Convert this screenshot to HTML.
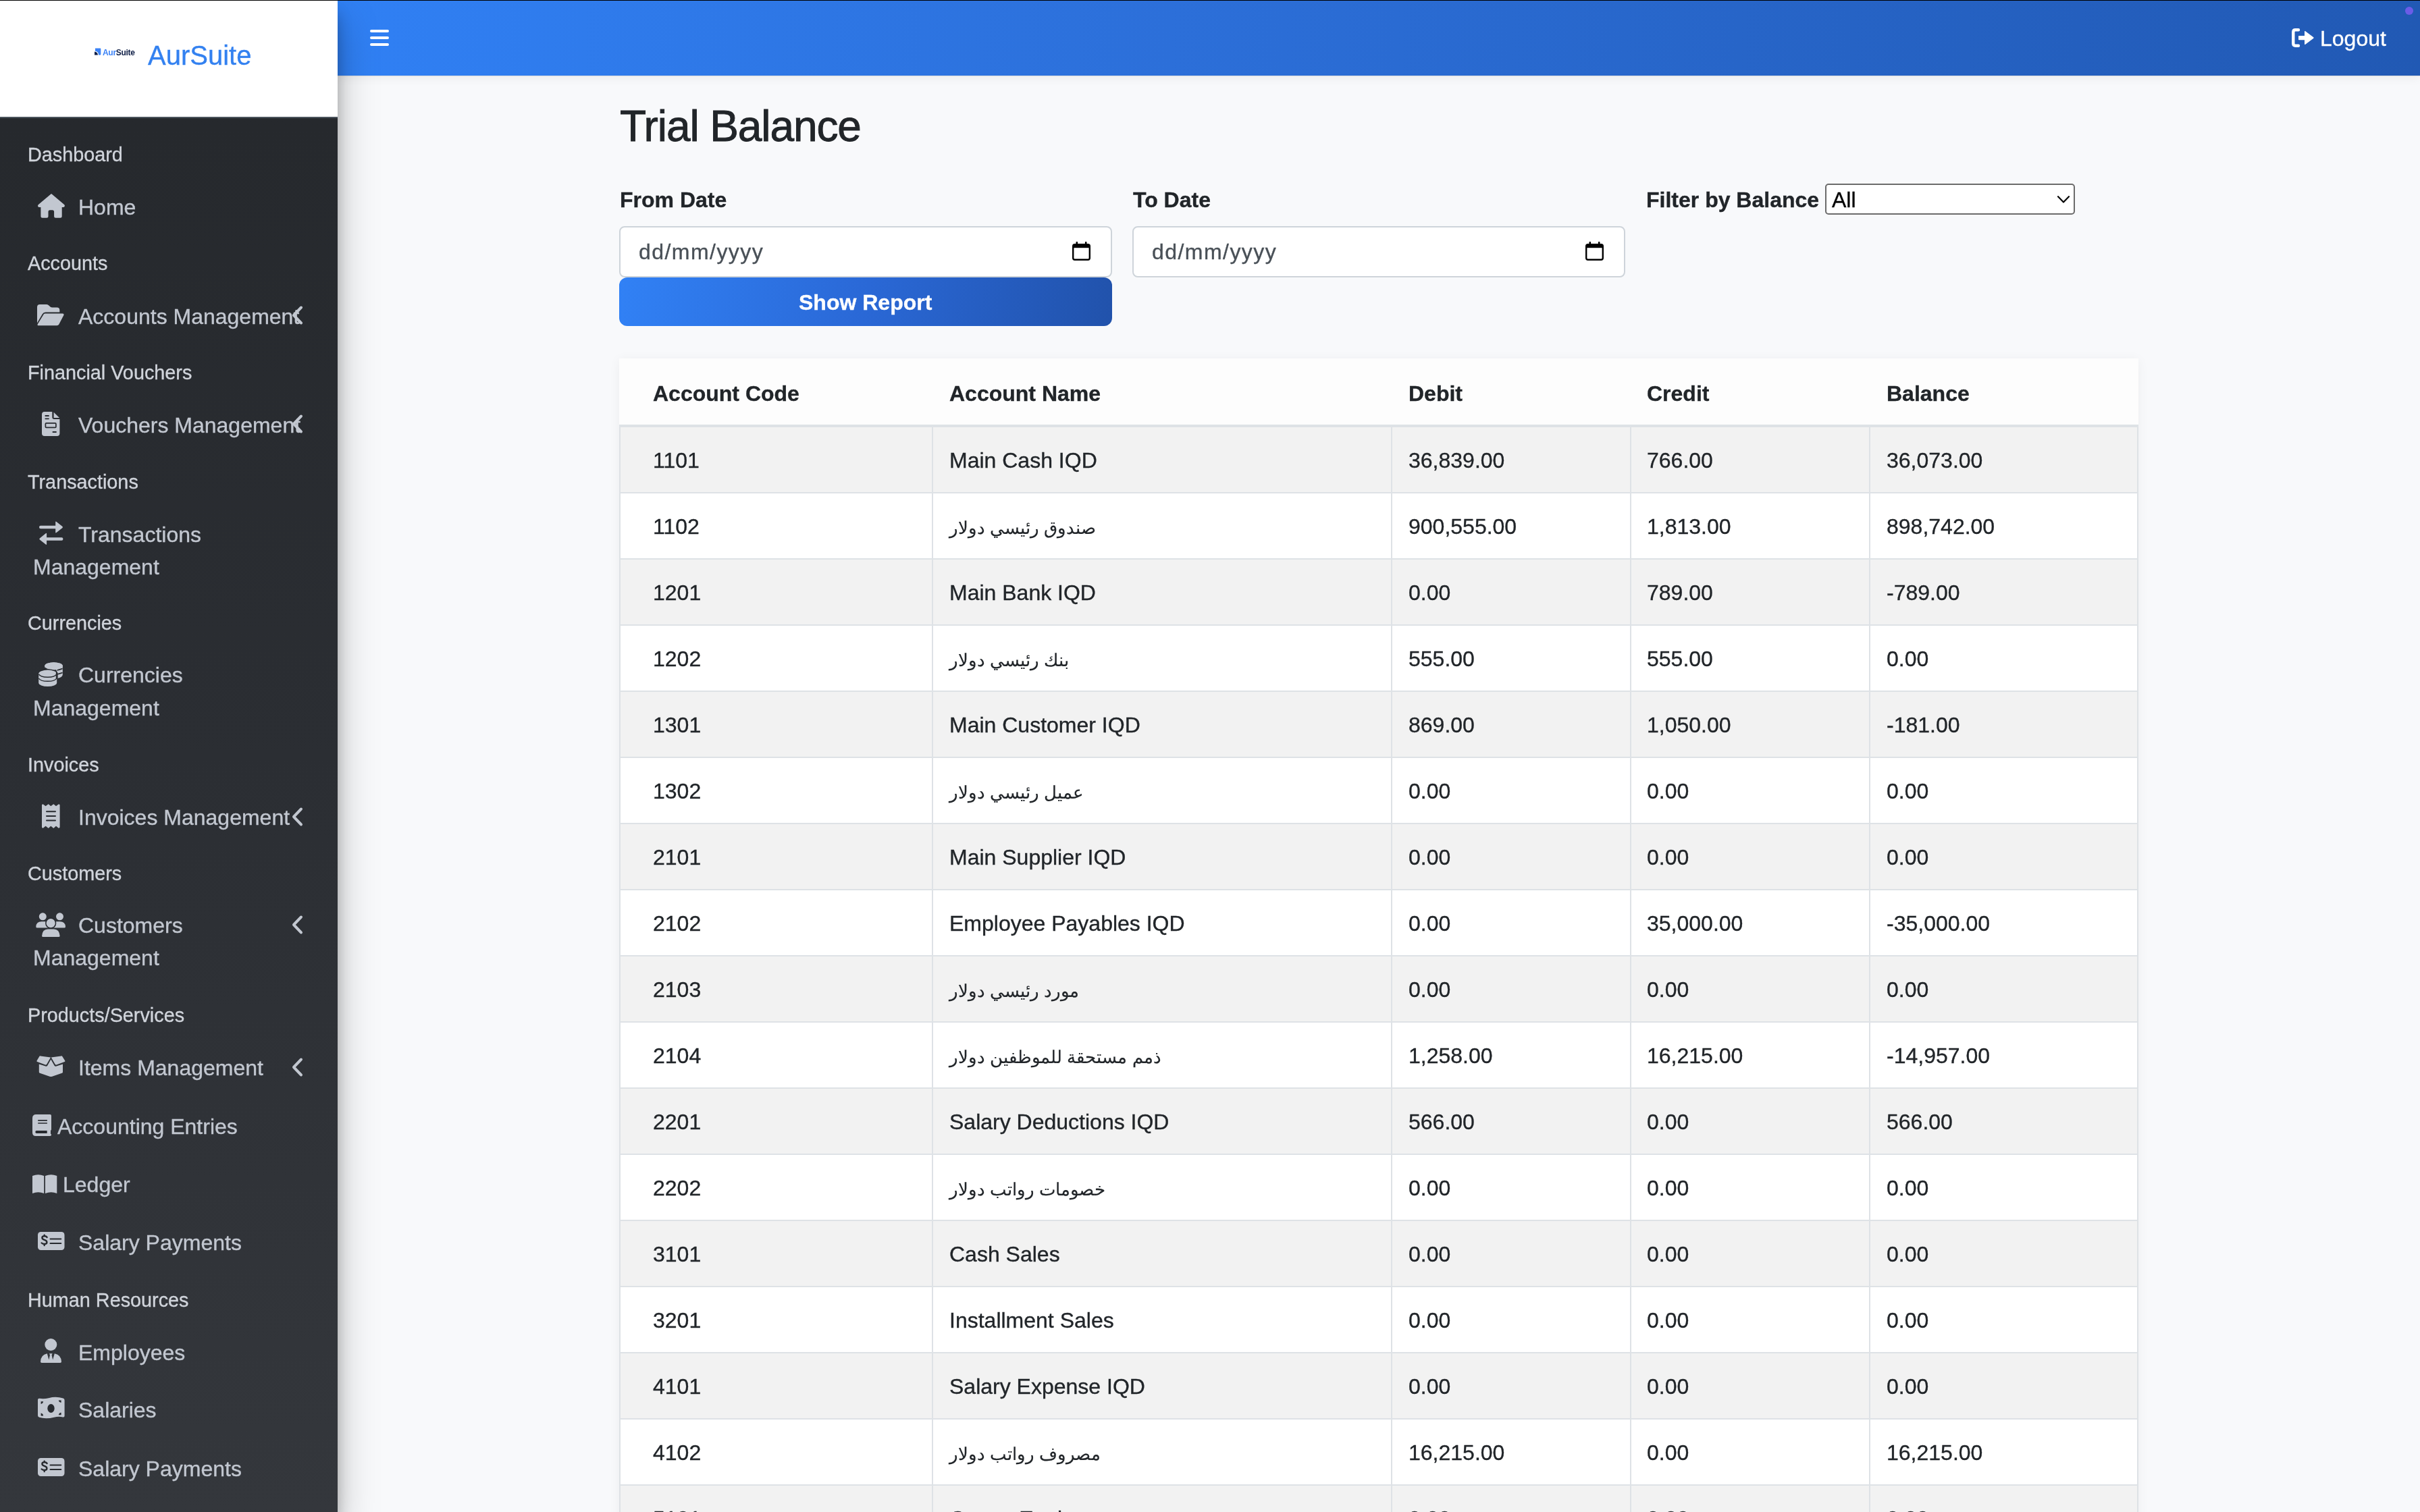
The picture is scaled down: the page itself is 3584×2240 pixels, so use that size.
<!DOCTYPE html>
<html><head><meta charset="utf-8"><title>Trial Balance</title><style>
*{margin:0;padding:0;box-sizing:border-box}
html,body{width:3584px;height:2240px;overflow:hidden;background:#f8f9fb;font-family:"Liberation Sans",sans-serif}
.t{position:absolute;white-space:nowrap;line-height:1;will-change:transform;-webkit-text-stroke:0.35px currentColor}
.abs{position:absolute}
svg{position:absolute;overflow:visible}
@media (max-width:2400px){html{zoom:0.5}}
</style></head><body>
<div class="abs" style="left:0;top:0;width:3584px;height:1px;background:#000;z-index:50"></div><div class="abs" style="left:500px;top:1px;width:3084px;height:111px;background:linear-gradient(90deg,#3080f4 0%,#2c6fd9 40%,#2159b4 100%);box-shadow:0 1px 1px rgba(0,0,0,.07),0 4px 14px rgba(0,0,0,.05);z-index:5"></div><svg style="left:548px;top:44px;z-index:6" width="28" height="24" viewBox="0 0 28 24"><rect x="0" y="0" width="28" height="4" rx="2" fill="#fff"/><rect x="0" y="10" width="28" height="4" rx="2" fill="#fff"/><rect x="0" y="20" width="28" height="4" rx="2" fill="#fff"/></svg><svg style="left:3394px;top:42px;z-index:6" width="33" height="28" viewBox="0 0 33 28"><path d="M10 2.3 H5.5 Q2.3 2.3 2.3 5.5 V22.5 Q2.3 25.7 5.5 25.7 H10" fill="none" stroke="#fff" stroke-width="4.4" stroke-linecap="round"/><path d="M10.7 11 H19 V4.8 Q19 3.5 20.3 4.3 L32.3 13.2 Q33 14 32.3 14.8 L20.3 23.7 Q19 24.5 19 23.2 V17.2 H10.7 Q10 17.2 10 16.5 V11.7 Q10 11 10.7 11Z" fill="#fff"/></svg><div class="t" style="left:3436px;top:40.91px;font-size:32px;color:#fff;font-weight:400;z-index:6">Logout</div>
<div class="abs" style="left:3562px;top:10px;width:12px;height:12px;border-radius:6px;background:#6b5ce7;z-index:7"></div><div class="abs" style="left:0;top:1px;width:500px;height:2239px;background:linear-gradient(180deg,#25282c 0%,#2b2e33 50%,#34373c 100%);box-shadow:0 28px 56px rgba(0,0,0,.25),0 20px 20px rgba(0,0,0,.22);z-index:10"></div><div class="abs" style="left:0;top:1px;width:500px;height:172px;background:#fff;border-bottom:2px solid #4b545c;z-index:11;height:174px"></div><svg style="left:140px;top:71px;z-index:12" width="60" height="12" viewBox="0 0 60 12"><path d="M1 0.5 H8.5 Q9.3 0.5 9.3 1.3 V9.5 Q9.3 10.5 8.3 10.5 H6 Q6 5.5 1 4.8 Z" fill="#3b82f6"/><path d="M0 5.5 Q4.5 6 5 10.5 H0 Z" fill="#0f1f47"/></svg><div class="t" style="left:152px;top:71.64px;font-size:12px;color:#0f1f47;font-weight:700;z-index:12;letter-spacing:-0.3px;-webkit-text-stroke:0"><span style="color:#3b82f6">Aur</span>Suite</div>
<div class="t" style="left:219px;top:62.14px;font-size:40px;color:#3381f0;font-weight:400;z-index:12">AurSuite</div>
<div class="t" style="left:41px;top:214.62px;font-size:28.8px;color:#d0d4db;font-weight:400;z-index:12">Dashboard</div>
<div class="t" style="left:41px;top:375.62px;font-size:28.8px;color:#d0d4db;font-weight:400;z-index:12">Accounts</div>
<div class="t" style="left:41px;top:537.62px;font-size:28.8px;color:#d0d4db;font-weight:400;z-index:12">Financial Vouchers</div>
<div class="t" style="left:41px;top:699.62px;font-size:28.8px;color:#d0d4db;font-weight:400;z-index:12">Transactions</div>
<div class="t" style="left:41px;top:908.62px;font-size:28.8px;color:#d0d4db;font-weight:400;z-index:12">Currencies</div>
<div class="t" style="left:41px;top:1118.62px;font-size:28.8px;color:#d0d4db;font-weight:400;z-index:12">Invoices</div>
<div class="t" style="left:41px;top:1279.62px;font-size:28.8px;color:#d0d4db;font-weight:400;z-index:12">Customers</div>
<div class="t" style="left:41px;top:1489.62px;font-size:28.8px;color:#d0d4db;font-weight:400;z-index:12">Products/Services</div>
<div class="t" style="left:41px;top:1911.62px;font-size:28.8px;color:#d0d4db;font-weight:400;z-index:12">Human Resources</div>
<div class="t" style="left:116px;top:290.91px;font-size:32px;color:#c2c7d0;font-weight:400;z-index:12">Home</div>
<div class="t" style="left:116px;top:452.91px;font-size:32px;color:#c2c7d0;font-weight:400;z-index:12">Accounts Management</div>
<div class="t" style="left:116px;top:613.91px;font-size:32px;color:#c2c7d0;font-weight:400;z-index:12">Vouchers Management</div>
<div class="t" style="left:116px;top:775.91px;font-size:32px;color:#c2c7d0;font-weight:400;z-index:12">Transactions</div>
<div class="t" style="left:49px;top:823.91px;font-size:32px;color:#c2c7d0;font-weight:400;z-index:12">Management</div>
<div class="t" style="left:116px;top:983.91px;font-size:32px;color:#c2c7d0;font-weight:400;z-index:12">Currencies</div>
<div class="t" style="left:49px;top:1032.91px;font-size:32px;color:#c2c7d0;font-weight:400;z-index:12">Management</div>
<div class="t" style="left:116px;top:1194.91px;font-size:32px;color:#c2c7d0;font-weight:400;z-index:12">Invoices Management</div>
<div class="t" style="left:116px;top:1354.91px;font-size:32px;color:#c2c7d0;font-weight:400;z-index:12">Customers</div>
<div class="t" style="left:49px;top:1402.91px;font-size:32px;color:#c2c7d0;font-weight:400;z-index:12">Management</div>
<div class="t" style="left:116px;top:1565.91px;font-size:32px;color:#c2c7d0;font-weight:400;z-index:12">Items Management</div>
<div class="t" style="left:85px;top:1652.91px;font-size:32px;color:#c2c7d0;font-weight:400;z-index:12">Accounting Entries</div>
<div class="t" style="left:93px;top:1738.91px;font-size:32px;color:#c2c7d0;font-weight:400;z-index:12">Ledger</div>
<div class="t" style="left:116px;top:1824.91px;font-size:32px;color:#c2c7d0;font-weight:400;z-index:12">Salary Payments</div>
<div class="t" style="left:116px;top:1987.91px;font-size:32px;color:#c2c7d0;font-weight:400;z-index:12">Employees</div>
<div class="t" style="left:116px;top:2072.91px;font-size:32px;color:#c2c7d0;font-weight:400;z-index:12">Salaries</div>
<div class="t" style="left:116px;top:2159.91px;font-size:32px;color:#c2c7d0;font-weight:400;z-index:12">Salary Payments</div>
<svg style="left:432px;top:453px;z-index:13" width="18" height="28" viewBox="0 0 18 28"><path d="M14 2.5 L3 14 L14 25.5" fill="none" stroke="#c2c7d0" stroke-width="4" stroke-linecap="round" stroke-linejoin="round"/></svg><svg style="left:432px;top:614px;z-index:13" width="18" height="28" viewBox="0 0 18 28"><path d="M14 2.5 L3 14 L14 25.5" fill="none" stroke="#c2c7d0" stroke-width="4" stroke-linecap="round" stroke-linejoin="round"/></svg><svg style="left:432px;top:1196px;z-index:13" width="18" height="28" viewBox="0 0 18 28"><path d="M14 2.5 L3 14 L14 25.5" fill="none" stroke="#c2c7d0" stroke-width="4" stroke-linecap="round" stroke-linejoin="round"/></svg><svg style="left:432px;top:1356px;z-index:13" width="18" height="28" viewBox="0 0 18 28"><path d="M14 2.5 L3 14 L14 25.5" fill="none" stroke="#c2c7d0" stroke-width="4" stroke-linecap="round" stroke-linejoin="round"/></svg><svg style="left:432px;top:1567px;z-index:13" width="18" height="28" viewBox="0 0 18 28"><path d="M14 2.5 L3 14 L14 25.5" fill="none" stroke="#c2c7d0" stroke-width="4" stroke-linecap="round" stroke-linejoin="round"/></svg><svg style="left:55.5px;top:287px;z-index:13;color:#272a2f" width="40" height="36" viewBox="0 0 40 36"><path d="M19.7 0.3 Q20 0 20.4 0.3 L39.3 16.3 Q40.6 17.7 39.4 19.3 Q38.8 20 37.6 20 H35.7 V33.3 Q35.7 35.8 33.2 35.8 H26.6 Q24.1 35.8 24.1 33.3 V26.7 Q24.1 24.2 21.6 24.2 H18 Q15.5 24.2 15.5 26.7 V33.3 Q15.5 35.8 13 35.8 H6.9 Q4.4 35.8 4.4 33.3 V20 H2.2 Q1 20 0.4 19.3 Q-0.6 17.7 0.7 16.3 Z" fill="#c2c7d0"/></svg><svg style="left:55.3px;top:451px;z-index:13;color:#272a2f" width="40" height="32" viewBox="0 0 40 32"><path d="M0 4 Q0 0 4 0 H13.5 Q15.5 0 17 1.3 L19.5 3.6 Q20.6 4.6 22.5 4.6 H29.3 Q33.3 4.6 33.3 8.6 V11.6 H12.5 Q9.3 11.6 7.8 14.3 L0 27.5 Z" fill="#c2c7d0"/><path d="M9.6 14.7 Q10.4 13.6 12 13.6 H37.5 Q40.4 13.6 39.2 16.2 L32.3 29.6 Q31.4 31.3 29.4 31.3 H2.2 Q-0.3 31.3 0.9 29 Z" fill="#c2c7d0"/></svg><svg style="left:62px;top:609.7px;z-index:13;color:#272a2f" width="27" height="36" viewBox="0 0 27 36"><path d="M0 4 Q0 0 4 0 H15.3 V8 Q15.3 10.9 18.2 10.9 H26.4 V31.9 Q26.4 35.9 22.4 35.9 H4 Q0 35.9 0 31.9 Z" fill="#c2c7d0"/><path d="M17.6 0.8 L26 8.9 H17.6 Z" fill="#c2c7d0"/><path d="M5.3 6 H10 M5.3 10.3 H10 M16.4 30 H21 " stroke="currentColor" stroke-width="1.8" stroke-linecap="round"/><rect x="5.4" y="16.9" width="15.5" height="6.5" rx="1.2" fill="none" stroke="currentColor" stroke-width="1.7"/></svg><svg style="left:57.5px;top:772px;z-index:13;color:#272a2f" width="36" height="36" viewBox="0 0 36 36"><path d="M2.2 9 H25" stroke="#c2c7d0" stroke-width="4.4" stroke-linecap="round"/><path d="M24.2 1.5 Q24.2 -0.3 25.6 0.9 L34.5 8.1 Q35.4 9 34.5 9.9 L25.6 17.1 Q24.2 18.3 24.2 16.5 Z" fill="#c2c7d0"/><path d="M10.5 26.5 H33.2" stroke="#c2c7d0" stroke-width="4.4" stroke-linecap="round"/><path d="M11.1 18.9 Q11.1 17.2 9.7 18.3 L0.8 25.6 Q-0.1 26.5 0.8 27.4 L9.7 34.6 Q11.1 35.8 11.1 34 Z" fill="#c2c7d0"/></svg><svg style="left:56.9px;top:980.7px;z-index:13;color:#272a2f" width="37" height="37" viewBox="0 0 37 37"><path d="M9.2 5.8 A13.3 5.6 0 0 1 35.8 5.8 V18.6 Q35.8 22.5 27 24.3 V14 Q27 10.6 22.5 9 Q17 7.5 9.5 8 Z" fill="#c2c7d0"/><ellipse cx="22.6" cy="5.8" rx="13.3" ry="5.6" fill="#c2c7d0"/><path d="M-1.3 17.1 A15 6.9 0 0 1 28.7 17.1 V25 H-1.3Z" fill="currentColor"/><path d="M0.2 17.1 A13.5 5.6 0 0 1 27.2 17.1 V30.5 A13.5 5.6 0 0 1 0.2 30.5 Z" fill="#c2c7d0"/><path d="M0.5 17.8 A13.5 5.6 0 0 0 26.8 17.8 M0.5 24 A13.5 5.6 0 0 0 26.8 24 M26.6 14 V24 M27.5 12 Q31.5 11 35.6 9.5 M27.5 18 Q31.5 17 35.6 15.5" fill="none" stroke="currentColor" stroke-width="1.5"/></svg><svg style="left:61.8px;top:1190.7px;z-index:13;color:#272a2f" width="27" height="37" viewBox="0 0 27 37"><path d="M0 1.3 L1.5 0.2 L5.6 3.3 L9.7 0.2 L13.3 3.3 L17.3 0.2 L21 3.3 L25 0.2 L26.6 1.3 V34.8 L25 35.9 L21 32.8 L17.3 35.9 L13.3 32.8 L9.7 35.9 L5.6 32.8 L1.5 35.9 L0 34.8 Z" fill="#c2c7d0"/><path d="M7 11.3 H20 M7 18.1 H20 M7 24.6 H20" stroke="currentColor" stroke-width="2" stroke-linecap="round"/></svg><svg style="left:52.9px;top:1351.7px;z-index:13;color:#272a2f" width="45" height="37" viewBox="0 0 45 37"><circle cx="10.3" cy="5.8" r="5.5" fill="#c2c7d0"/><circle cx="35.5" cy="5.8" r="5.5" fill="#c2c7d0"/><path d="M0.3 21 Q0.6 13.3 8.5 13.3 H14 Q15.8 13.3 16 14 Q16.3 18.5 18.3 22.4 H1.5 Q0.3 22.4 0.3 21Z" fill="#c2c7d0"/><path d="M44 21 Q43.7 13.3 35.8 13.3 H30.3 Q28.5 13.3 28.3 14 Q28 18.5 26 22.4 H42.8 Q44 22.4 44 21Z" fill="#c2c7d0"/><circle cx="22.2" cy="15.7" r="8.1" fill="currentColor"/><circle cx="22.2" cy="15.7" r="6.6" fill="#c2c7d0"/><path d="M9.1 34.5 Q9.6 24.4 18 24.4 H26.6 Q35 24.4 35.6 34.5 Q35.6 36.1 34 36.1 H10.7 Q9.1 36.1 9.1 34.5Z" fill="#c2c7d0"/></svg><svg style="left:53.7px;top:1564px;z-index:13;color:#272a2f" width="43" height="32" viewBox="0 0 43 32"><path d="M3.8 12.5 L14 15.8 Q15.4 16.1 16.2 14.8 L21.4 5.4 L26.6 14.8 Q27.4 16.1 28.8 15.8 L39 12.5 V24.2 Q39 25.4 37.8 25.8 L22.6 30.9 Q21.4 31.3 20.2 30.9 L5 25.8 Q3.8 25.4 3.8 24.2 Z" fill="#c2c7d0"/><path d="M4.2 1.3 Q4.7 0.2 5.9 0.4 L21 2.6 L15.3 12.6 Q14.6 13.8 13.3 13.4 L1.2 9 Q0 8.5 0.5 7.4 Z" fill="#c2c7d0"/><path d="M38.4 1.3 Q37.9 0.2 36.7 0.4 L21.8 2.6 L27.5 12.6 Q28.2 13.8 29.5 13.4 L41.6 9 Q42.8 8.5 42.3 7.4 Z" fill="#c2c7d0"/></svg><svg style="left:48px;top:1651px;z-index:13;color:#272a2f" width="28" height="32" viewBox="0 0 28 32"><path d="M5.5 0 H26.2 Q28 0 28 1.8 V22.5 Q28 23.5 27 23.8 V28.7 Q28 29 28 30.2 Q28 32 26.2 32 H5 Q0 32 0 27 V5.5 Q0 0 5.5 0Z" fill="#c2c7d0"/><path d="M8.2 8.8 H21.9 M8.2 13 H21.9" stroke="currentColor" stroke-width="1.7"/><path d="M6.2 24.1 H21.7 V27.9 H6.2 Q4.3 27.9 4.3 26 Q4.3 24.1 6.2 24.1Z" fill="currentColor"/></svg><svg style="left:48px;top:1740px;z-index:13;color:#272a2f" width="37" height="29" viewBox="0 0 37 29"><path d="M0 2 Q8.5 -1.5 17.2 2 V28 Q8.5 24.5 0 28 Z" fill="#c2c7d0"/><path d="M19 2 Q27.7 -1.5 36.3 2 V28 Q27.7 24.5 19 28 Z" fill="#c2c7d0"/></svg><svg style="left:55.5px;top:1825px;z-index:13;color:#272a2f" width="40" height="28" viewBox="0 0 40 28"><rect x="0" y="0" width="39.5" height="27" rx="4.5" fill="#c2c7d0"/><path d="M13.6 8 Q12.5 6.3 9.7 6.3 Q6.4 6.3 6.4 8.8 Q6.4 10.9 9.8 11.9 Q13.4 12.9 13.4 15.4 Q13.4 18 9.7 18 Q6.8 18 5.6 16.4 M9.7 4.7 V6.4 M9.7 17.9 V20.1" fill="none" stroke="currentColor" stroke-width="2.4" stroke-linecap="round"/><path d="M18.5 10.4 H34.3 M18.5 17.1 H34.3" stroke="currentColor" stroke-width="2" stroke-linecap="round"/></svg><svg style="left:55.5px;top:2160px;z-index:13;color:#272a2f" width="40" height="28" viewBox="0 0 40 28"><rect x="0" y="0" width="39.5" height="27" rx="4.5" fill="#c2c7d0"/><path d="M13.6 8 Q12.5 6.3 9.7 6.3 Q6.4 6.3 6.4 8.8 Q6.4 10.9 9.8 11.9 Q13.4 12.9 13.4 15.4 Q13.4 18 9.7 18 Q6.8 18 5.6 16.4 M9.7 4.7 V6.4 M9.7 17.9 V20.1" fill="none" stroke="currentColor" stroke-width="2.4" stroke-linecap="round"/><path d="M18.5 10.4 H34.3 M18.5 17.1 H34.3" stroke="currentColor" stroke-width="2" stroke-linecap="round"/></svg><svg style="left:59.8px;top:1982.7px;z-index:13;color:#272a2f" width="31" height="36" viewBox="0 0 31 36"><circle cx="15.3" cy="9" r="9" fill="#c2c7d0"/><path d="M0 34.2 Q0.5 24 9.8 22.2 L12.4 31.5 L14 24.5 L13 22.3 H17.6 L16.6 24.5 L18.2 31.5 L20.8 22.2 Q30.5 24 31 34.2 Q31 35.9 29.3 35.9 H1.7 Q0 35.9 0 34.2Z" fill="#c2c7d0"/></svg><svg style="left:55.5px;top:2071px;z-index:13;color:#272a2f" width="40" height="32" viewBox="0 0 40 32"><path d="M0 3 Q0 0.5 2.5 0.8 Q9 2 16 0.2 Q27 -2.8 37.5 0.6 Q39.6 1.2 39.6 3.5 V26.5 Q39.6 29 37 28.4 Q31 27 24 28.7 Q12 31.8 2.2 28.8 Q0 28.2 0 26 Z" fill="#c2c7d0"/><ellipse cx="19.5" cy="15.5" rx="5.2" ry="6.4" fill="currentColor"/><path d="M4.6 5.2 H8.1 Q7.6 8.4 4.6 8.9Z M4.6 22.6 Q7.7 23 8.1 26.4 H4.6Z M34.6 3.6 V7 Q31.4 6.7 30.8 3.6Z M34.6 21.7 V25.3 H30.8 Q31.3 22 34.6 21.7Z" fill="currentColor"/></svg><div class="t" style="left:918px;top:154.82px;font-size:64px;color:#212529;font-weight:500;-webkit-text-stroke:0.9px #212529;letter-spacing:-1.1px">Trial Balance</div>
<div class="t" style="left:918px;top:279.91px;font-size:32px;color:#212529;font-weight:700;">From Date</div>
<div class="t" style="left:1678px;top:279.91px;font-size:32px;color:#212529;font-weight:700;">To Date</div>
<div class="t" style="left:2438px;top:279.91px;font-size:32px;color:#212529;font-weight:700;">Filter by Balance</div>
<div class="abs" style="left:917px;top:335px;width:730px;height:76px;background:#fff;border:2px solid #ced4da;border-radius:8px"></div><div class="t" style="left:946px;top:356.91px;font-size:32px;color:#495057;font-weight:400;letter-spacing:1.45px">dd/mm/yyyy</div>
<svg style="left:1588px;top:358px" width="27" height="28" viewBox="0 0 27 28"><rect x="1.2" y="4.2" width="24.6" height="22.6" rx="2.5" fill="none" stroke="#000" stroke-width="2.4"/><rect x="1.2" y="4.2" width="24.6" height="5" fill="#000"/><rect x="5.5" y="0" width="2.6" height="6" rx="1" fill="#000"/><rect x="18.9" y="0" width="2.6" height="6" rx="1" fill="#000"/></svg><div class="abs" style="left:1677px;top:335px;width:730px;height:76px;background:#fff;border:2px solid #ced4da;border-radius:8px"></div><div class="t" style="left:1706px;top:356.91px;font-size:32px;color:#495057;font-weight:400;letter-spacing:1.45px">dd/mm/yyyy</div>
<svg style="left:2348px;top:358px" width="27" height="28" viewBox="0 0 27 28"><rect x="1.2" y="4.2" width="24.6" height="22.6" rx="2.5" fill="none" stroke="#000" stroke-width="2.4"/><rect x="1.2" y="4.2" width="24.6" height="5" fill="#000"/><rect x="5.5" y="0" width="2.6" height="6" rx="1" fill="#000"/><rect x="18.9" y="0" width="2.6" height="6" rx="1" fill="#000"/></svg><div class="abs" style="left:917px;top:411px;width:730px;height:72px;border-radius:12px;background:linear-gradient(100deg,#3181f5 0%,#2a68d6 50%,#2152ab 100%)"></div><div class="t" style="left:1183px;top:431.91px;font-size:32px;color:#fff;font-weight:700;">Show Report</div>
<div class="abs" style="left:2703px;top:272px;width:370px;height:46px;background:#fff;border:2px solid #6b6b6b;border-radius:5px"></div><div class="t" style="left:2713px;top:279.91px;font-size:32px;color:#000;font-weight:400;">All</div>
<svg style="left:3047px;top:290px" width="18" height="11" viewBox="0 0 18 11"><path d="M1 1.2 L9 9.5 L17 1.2" fill="none" stroke="#000" stroke-width="2.2" stroke-linecap="round" stroke-linejoin="round"/></svg><div class="abs" style="left:917px;top:531px;width:2250px;height:1800px;background:#fff;box-shadow:0 2px 16px rgba(0,0,0,.05)"></div><div class="abs" style="left:917px;top:531px;width:2250px;height:98px;background:#fdfdfd"></div><div class="abs" style="left:917px;top:629px;width:2250px;height:4px;background:#dee2e6"></div><div class="t" style="left:967px;top:566.91px;font-size:32px;color:#212529;font-weight:700;">Account Code</div>
<div class="t" style="left:1406px;top:566.91px;font-size:32px;color:#212529;font-weight:700;">Account Name</div>
<div class="t" style="left:2086px;top:566.91px;font-size:32px;color:#212529;font-weight:700;">Debit</div>
<div class="t" style="left:2439px;top:566.91px;font-size:32px;color:#212529;font-weight:700;">Credit</div>
<div class="t" style="left:2794px;top:566.91px;font-size:32px;color:#212529;font-weight:700;">Balance</div>
<div class="abs" style="left:917px;top:633px;width:2250px;height:98px;background:#f2f2f2"></div><div class="abs" style="left:917px;top:729px;width:2250px;height:2px;background:#dee2e6"></div><div class="t" style="left:967px;top:665.91px;font-size:32px;color:#212529;font-weight:400;">1101</div>
<div class="t" style="left:1406px;top:665.91px;font-size:32px;color:#212529;font-weight:400;">Main Cash IQD</div>
<div class="t" style="left:2086px;top:665.91px;font-size:32px;color:#212529;font-weight:400;">36,839.00</div>
<div class="t" style="left:2439px;top:665.91px;font-size:32px;color:#212529;font-weight:400;">766.00</div>
<div class="t" style="left:2794px;top:665.91px;font-size:32px;color:#212529;font-weight:400;">36,073.00</div>
<div class="abs" style="left:917px;top:731px;width:2250px;height:98px;background:#fff"></div><div class="abs" style="left:917px;top:827px;width:2250px;height:2px;background:#dee2e6"></div><div class="t" style="left:967px;top:763.91px;font-size:32px;color:#212529;font-weight:400;">1102</div>
<div class="t" style="left:1406px;top:768.99px;font-size:26px;color:#212529;font-weight:400;direction:rtl;unicode-bidi:plaintext;-webkit-text-stroke:0.15px currentColor">صندوق رئيسي دولار</div>
<div class="t" style="left:2086px;top:763.91px;font-size:32px;color:#212529;font-weight:400;">900,555.00</div>
<div class="t" style="left:2439px;top:763.91px;font-size:32px;color:#212529;font-weight:400;">1,813.00</div>
<div class="t" style="left:2794px;top:763.91px;font-size:32px;color:#212529;font-weight:400;">898,742.00</div>
<div class="abs" style="left:917px;top:829px;width:2250px;height:98px;background:#f2f2f2"></div><div class="abs" style="left:917px;top:925px;width:2250px;height:2px;background:#dee2e6"></div><div class="t" style="left:967px;top:861.91px;font-size:32px;color:#212529;font-weight:400;">1201</div>
<div class="t" style="left:1406px;top:861.91px;font-size:32px;color:#212529;font-weight:400;">Main Bank IQD</div>
<div class="t" style="left:2086px;top:861.91px;font-size:32px;color:#212529;font-weight:400;">0.00</div>
<div class="t" style="left:2439px;top:861.91px;font-size:32px;color:#212529;font-weight:400;">789.00</div>
<div class="t" style="left:2794px;top:861.91px;font-size:32px;color:#212529;font-weight:400;">-789.00</div>
<div class="abs" style="left:917px;top:927px;width:2250px;height:98px;background:#fff"></div><div class="abs" style="left:917px;top:1023px;width:2250px;height:2px;background:#dee2e6"></div><div class="t" style="left:967px;top:959.91px;font-size:32px;color:#212529;font-weight:400;">1202</div>
<div class="t" style="left:1406px;top:964.99px;font-size:26px;color:#212529;font-weight:400;direction:rtl;unicode-bidi:plaintext;-webkit-text-stroke:0.15px currentColor">بنك رئيسي دولار</div>
<div class="t" style="left:2086px;top:959.91px;font-size:32px;color:#212529;font-weight:400;">555.00</div>
<div class="t" style="left:2439px;top:959.91px;font-size:32px;color:#212529;font-weight:400;">555.00</div>
<div class="t" style="left:2794px;top:959.91px;font-size:32px;color:#212529;font-weight:400;">0.00</div>
<div class="abs" style="left:917px;top:1025px;width:2250px;height:98px;background:#f2f2f2"></div><div class="abs" style="left:917px;top:1121px;width:2250px;height:2px;background:#dee2e6"></div><div class="t" style="left:967px;top:1057.91px;font-size:32px;color:#212529;font-weight:400;">1301</div>
<div class="t" style="left:1406px;top:1057.91px;font-size:32px;color:#212529;font-weight:400;">Main Customer IQD</div>
<div class="t" style="left:2086px;top:1057.91px;font-size:32px;color:#212529;font-weight:400;">869.00</div>
<div class="t" style="left:2439px;top:1057.91px;font-size:32px;color:#212529;font-weight:400;">1,050.00</div>
<div class="t" style="left:2794px;top:1057.91px;font-size:32px;color:#212529;font-weight:400;">-181.00</div>
<div class="abs" style="left:917px;top:1123px;width:2250px;height:98px;background:#fff"></div><div class="abs" style="left:917px;top:1219px;width:2250px;height:2px;background:#dee2e6"></div><div class="t" style="left:967px;top:1155.91px;font-size:32px;color:#212529;font-weight:400;">1302</div>
<div class="t" style="left:1406px;top:1160.99px;font-size:26px;color:#212529;font-weight:400;direction:rtl;unicode-bidi:plaintext;-webkit-text-stroke:0.15px currentColor">عميل رئيسي دولار</div>
<div class="t" style="left:2086px;top:1155.91px;font-size:32px;color:#212529;font-weight:400;">0.00</div>
<div class="t" style="left:2439px;top:1155.91px;font-size:32px;color:#212529;font-weight:400;">0.00</div>
<div class="t" style="left:2794px;top:1155.91px;font-size:32px;color:#212529;font-weight:400;">0.00</div>
<div class="abs" style="left:917px;top:1221px;width:2250px;height:98px;background:#f2f2f2"></div><div class="abs" style="left:917px;top:1317px;width:2250px;height:2px;background:#dee2e6"></div><div class="t" style="left:967px;top:1253.91px;font-size:32px;color:#212529;font-weight:400;">2101</div>
<div class="t" style="left:1406px;top:1253.91px;font-size:32px;color:#212529;font-weight:400;">Main Supplier IQD</div>
<div class="t" style="left:2086px;top:1253.91px;font-size:32px;color:#212529;font-weight:400;">0.00</div>
<div class="t" style="left:2439px;top:1253.91px;font-size:32px;color:#212529;font-weight:400;">0.00</div>
<div class="t" style="left:2794px;top:1253.91px;font-size:32px;color:#212529;font-weight:400;">0.00</div>
<div class="abs" style="left:917px;top:1319px;width:2250px;height:98px;background:#fff"></div><div class="abs" style="left:917px;top:1415px;width:2250px;height:2px;background:#dee2e6"></div><div class="t" style="left:967px;top:1351.91px;font-size:32px;color:#212529;font-weight:400;">2102</div>
<div class="t" style="left:1406px;top:1351.91px;font-size:32px;color:#212529;font-weight:400;">Employee Payables IQD</div>
<div class="t" style="left:2086px;top:1351.91px;font-size:32px;color:#212529;font-weight:400;">0.00</div>
<div class="t" style="left:2439px;top:1351.91px;font-size:32px;color:#212529;font-weight:400;">35,000.00</div>
<div class="t" style="left:2794px;top:1351.91px;font-size:32px;color:#212529;font-weight:400;">-35,000.00</div>
<div class="abs" style="left:917px;top:1417px;width:2250px;height:98px;background:#f2f2f2"></div><div class="abs" style="left:917px;top:1513px;width:2250px;height:2px;background:#dee2e6"></div><div class="t" style="left:967px;top:1449.91px;font-size:32px;color:#212529;font-weight:400;">2103</div>
<div class="t" style="left:1406px;top:1454.99px;font-size:26px;color:#212529;font-weight:400;direction:rtl;unicode-bidi:plaintext;-webkit-text-stroke:0.15px currentColor">مورد رئيسي دولار</div>
<div class="t" style="left:2086px;top:1449.91px;font-size:32px;color:#212529;font-weight:400;">0.00</div>
<div class="t" style="left:2439px;top:1449.91px;font-size:32px;color:#212529;font-weight:400;">0.00</div>
<div class="t" style="left:2794px;top:1449.91px;font-size:32px;color:#212529;font-weight:400;">0.00</div>
<div class="abs" style="left:917px;top:1515px;width:2250px;height:98px;background:#fff"></div><div class="abs" style="left:917px;top:1611px;width:2250px;height:2px;background:#dee2e6"></div><div class="t" style="left:967px;top:1547.91px;font-size:32px;color:#212529;font-weight:400;">2104</div>
<div class="t" style="left:1406px;top:1552.99px;font-size:26px;color:#212529;font-weight:400;direction:rtl;unicode-bidi:plaintext;-webkit-text-stroke:0.15px currentColor">ذمم مستحقة للموظفين دولار</div>
<div class="t" style="left:2086px;top:1547.91px;font-size:32px;color:#212529;font-weight:400;">1,258.00</div>
<div class="t" style="left:2439px;top:1547.91px;font-size:32px;color:#212529;font-weight:400;">16,215.00</div>
<div class="t" style="left:2794px;top:1547.91px;font-size:32px;color:#212529;font-weight:400;">-14,957.00</div>
<div class="abs" style="left:917px;top:1613px;width:2250px;height:98px;background:#f2f2f2"></div><div class="abs" style="left:917px;top:1709px;width:2250px;height:2px;background:#dee2e6"></div><div class="t" style="left:967px;top:1645.91px;font-size:32px;color:#212529;font-weight:400;">2201</div>
<div class="t" style="left:1406px;top:1645.91px;font-size:32px;color:#212529;font-weight:400;">Salary Deductions IQD</div>
<div class="t" style="left:2086px;top:1645.91px;font-size:32px;color:#212529;font-weight:400;">566.00</div>
<div class="t" style="left:2439px;top:1645.91px;font-size:32px;color:#212529;font-weight:400;">0.00</div>
<div class="t" style="left:2794px;top:1645.91px;font-size:32px;color:#212529;font-weight:400;">566.00</div>
<div class="abs" style="left:917px;top:1711px;width:2250px;height:98px;background:#fff"></div><div class="abs" style="left:917px;top:1807px;width:2250px;height:2px;background:#dee2e6"></div><div class="t" style="left:967px;top:1743.91px;font-size:32px;color:#212529;font-weight:400;">2202</div>
<div class="t" style="left:1406px;top:1748.99px;font-size:26px;color:#212529;font-weight:400;direction:rtl;unicode-bidi:plaintext;-webkit-text-stroke:0.15px currentColor">خصومات رواتب دولار</div>
<div class="t" style="left:2086px;top:1743.91px;font-size:32px;color:#212529;font-weight:400;">0.00</div>
<div class="t" style="left:2439px;top:1743.91px;font-size:32px;color:#212529;font-weight:400;">0.00</div>
<div class="t" style="left:2794px;top:1743.91px;font-size:32px;color:#212529;font-weight:400;">0.00</div>
<div class="abs" style="left:917px;top:1809px;width:2250px;height:98px;background:#f2f2f2"></div><div class="abs" style="left:917px;top:1905px;width:2250px;height:2px;background:#dee2e6"></div><div class="t" style="left:967px;top:1841.91px;font-size:32px;color:#212529;font-weight:400;">3101</div>
<div class="t" style="left:1406px;top:1841.91px;font-size:32px;color:#212529;font-weight:400;">Cash Sales</div>
<div class="t" style="left:2086px;top:1841.91px;font-size:32px;color:#212529;font-weight:400;">0.00</div>
<div class="t" style="left:2439px;top:1841.91px;font-size:32px;color:#212529;font-weight:400;">0.00</div>
<div class="t" style="left:2794px;top:1841.91px;font-size:32px;color:#212529;font-weight:400;">0.00</div>
<div class="abs" style="left:917px;top:1907px;width:2250px;height:98px;background:#fff"></div><div class="abs" style="left:917px;top:2003px;width:2250px;height:2px;background:#dee2e6"></div><div class="t" style="left:967px;top:1939.91px;font-size:32px;color:#212529;font-weight:400;">3201</div>
<div class="t" style="left:1406px;top:1939.91px;font-size:32px;color:#212529;font-weight:400;">Installment Sales</div>
<div class="t" style="left:2086px;top:1939.91px;font-size:32px;color:#212529;font-weight:400;">0.00</div>
<div class="t" style="left:2439px;top:1939.91px;font-size:32px;color:#212529;font-weight:400;">0.00</div>
<div class="t" style="left:2794px;top:1939.91px;font-size:32px;color:#212529;font-weight:400;">0.00</div>
<div class="abs" style="left:917px;top:2005px;width:2250px;height:98px;background:#f2f2f2"></div><div class="abs" style="left:917px;top:2101px;width:2250px;height:2px;background:#dee2e6"></div><div class="t" style="left:967px;top:2037.91px;font-size:32px;color:#212529;font-weight:400;">4101</div>
<div class="t" style="left:1406px;top:2037.91px;font-size:32px;color:#212529;font-weight:400;">Salary Expense IQD</div>
<div class="t" style="left:2086px;top:2037.91px;font-size:32px;color:#212529;font-weight:400;">0.00</div>
<div class="t" style="left:2439px;top:2037.91px;font-size:32px;color:#212529;font-weight:400;">0.00</div>
<div class="t" style="left:2794px;top:2037.91px;font-size:32px;color:#212529;font-weight:400;">0.00</div>
<div class="abs" style="left:917px;top:2103px;width:2250px;height:98px;background:#fff"></div><div class="abs" style="left:917px;top:2199px;width:2250px;height:2px;background:#dee2e6"></div><div class="t" style="left:967px;top:2135.91px;font-size:32px;color:#212529;font-weight:400;">4102</div>
<div class="t" style="left:1406px;top:2140.99px;font-size:26px;color:#212529;font-weight:400;direction:rtl;unicode-bidi:plaintext;-webkit-text-stroke:0.15px currentColor">مصروف رواتب دولار</div>
<div class="t" style="left:2086px;top:2135.91px;font-size:32px;color:#212529;font-weight:400;">16,215.00</div>
<div class="t" style="left:2439px;top:2135.91px;font-size:32px;color:#212529;font-weight:400;">0.00</div>
<div class="t" style="left:2794px;top:2135.91px;font-size:32px;color:#212529;font-weight:400;">16,215.00</div>
<div class="abs" style="left:917px;top:2201px;width:2250px;height:98px;background:#f2f2f2"></div><div class="abs" style="left:917px;top:2297px;width:2250px;height:2px;background:#dee2e6"></div><div class="t" style="left:967px;top:2233.91px;font-size:32px;color:#212529;font-weight:400;">5101</div>
<div class="t" style="left:1406px;top:2233.91px;font-size:32px;color:#212529;font-weight:400;">Owner Equity</div>
<div class="t" style="left:2086px;top:2233.91px;font-size:32px;color:#212529;font-weight:400;">0.00</div>
<div class="t" style="left:2439px;top:2233.91px;font-size:32px;color:#212529;font-weight:400;">0.00</div>
<div class="t" style="left:2794px;top:2233.91px;font-size:32px;color:#212529;font-weight:400;">0.00</div>
<div class="abs" style="left:917px;top:633px;width:2px;height:1700px;background:#dee2e6"></div><div class="abs" style="left:1380px;top:633px;width:2px;height:1700px;background:#dee2e6"></div><div class="abs" style="left:2060px;top:633px;width:2px;height:1700px;background:#dee2e6"></div><div class="abs" style="left:2414px;top:633px;width:2px;height:1700px;background:#dee2e6"></div><div class="abs" style="left:2768px;top:633px;width:2px;height:1700px;background:#dee2e6"></div><div class="abs" style="left:3165px;top:633px;width:2px;height:1700px;background:#dee2e6"></div>
</body></html>
